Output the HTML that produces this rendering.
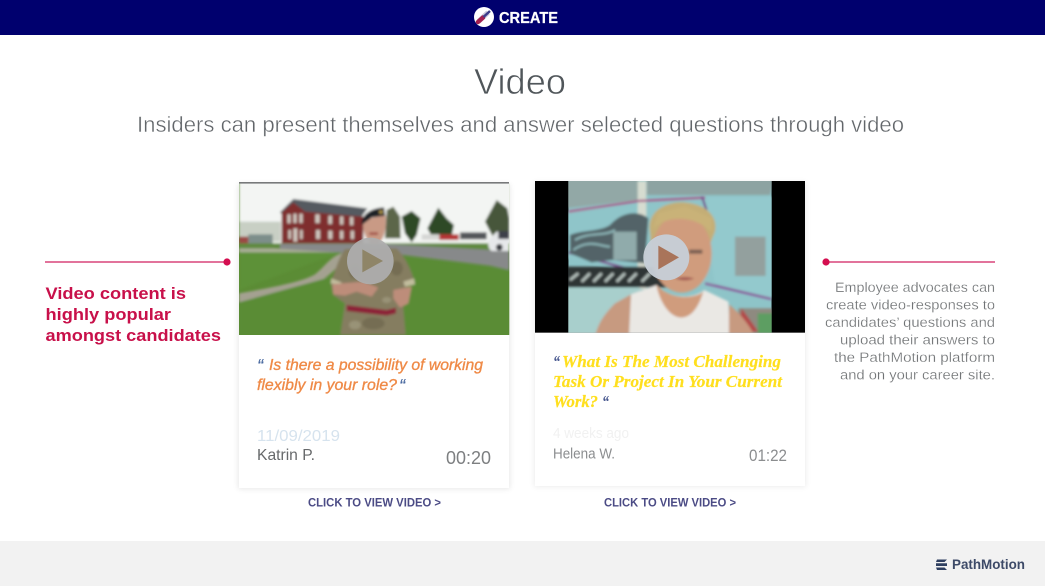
<!DOCTYPE html>
<html lang="en"><head><meta charset="utf-8"><title>Video</title>
<style>
html,body{margin:0;padding:0;background:#fff;width:1045px;height:586px;overflow:hidden}
svg{display:block}
text{font-family:"Liberation Sans",sans-serif}
</style></head><body>
<svg width="1045" height="586" viewBox="0 0 1045 586" xmlns="http://www.w3.org/2000/svg">
<defs>
<filter id="b" x="-10%" y="-10%" width="120%" height="120%"><feGaussianBlur stdDeviation="3.6"/></filter>
<filter id="s" x="-10%" y="-10%" width="120%" height="120%"><feGaussianBlur stdDeviation="3"/></filter>
<clipPath id="c1"><rect x="27" y="25" width="811" height="455"/></clipPath>
<clipPath id="c2"><rect x="130" y="18" width="610" height="455"/></clipPath>
</defs>
<rect width="1045" height="586" fill="#fff"/>
<rect width="1045" height="35" fill="#00006e"/>
<circle cx="484" cy="17" r="10" fill="#fff"/>
<path d="M478.5 21.5 L488 12.5" stroke="#c8c8d8" stroke-width="5"/>
<path d="M478 22 L483 17.5" stroke="#a31f50" stroke-width="4.5" stroke-linecap="round"/>
<path d="M483.5 17 L490 11" stroke="#3d3d8a" stroke-width="2.5"/>
<text x="499" y="23" font-size="16" font-weight="700" fill="#fff" stroke="#fff" stroke-width=".25" textLength="59" lengthAdjust="spacingAndGlyphs">CREATE</text>

<text x="474" y="94" font-size="36.5" fill="#50565a" stroke="#fff" stroke-width=".7" textLength="92" lengthAdjust="spacingAndGlyphs">Video</text>
<text x="137" y="132" font-size="22" fill="#62666a" stroke="#fff" stroke-width=".4" textLength="767" lengthAdjust="spacingAndGlyphs">Insiders can present themselves and answer selected questions through video</text>

<!-- left callout -->
<path d="M45 262H227" stroke="#d8457a" stroke-width="1.4"/>
<circle cx="227" cy="262" r="3.6" fill="#d40e4f"/>
<g font-size="16.5" font-weight="700" fill="#c8104a">
<text x="45.5" y="299" textLength="140.5" lengthAdjust="spacingAndGlyphs">Video content is</text>
<text x="45.5" y="320" textLength="125.5" lengthAdjust="spacingAndGlyphs">highly popular</text>
<text x="45.5" y="341" textLength="175.5" lengthAdjust="spacingAndGlyphs">amongst candidates</text>
</g>

<!-- right callout -->
<path d="M826 262H995" stroke="#d8457a" stroke-width="1.4"/>
<circle cx="826" cy="262" r="3.6" fill="#d40e4f"/>
<g font-size="14.2" fill="#6f7274" stroke="#fff" stroke-width=".22">
<text x="835" y="292" textLength="160" lengthAdjust="spacingAndGlyphs">Employee advocates can</text>
<text x="826" y="309.5" textLength="169" lengthAdjust="spacingAndGlyphs">create video-responses to</text>
<text x="825" y="327" textLength="170" lengthAdjust="spacingAndGlyphs">candidates’ questions and</text>
<text x="840" y="344.5" textLength="155" lengthAdjust="spacingAndGlyphs">upload their answers to</text>
<text x="834" y="362" textLength="161" lengthAdjust="spacingAndGlyphs">the PathMotion platform</text>
<text x="840" y="379.5" textLength="155" lengthAdjust="spacingAndGlyphs">and on your career site.</text>
</g>

<!-- card shadows -->
<rect x="238" y="184" width="272" height="305" fill="#000" opacity=".09" filter="url(#s)"/>
<rect x="534" y="182" width="272" height="305" fill="#000" opacity=".07" filter="url(#s)"/>
<rect x="239" y="183" width="270" height="305" fill="#fff"/>
<rect x="535" y="181" width="270" height="305" fill="#fff"/>

<!-- photo 1 -->
<g transform="translate(230 175) scale(.33333)">
<g clip-path="url(#c1)">
<rect x="27" y="25" width="811" height="455" fill="#5b8c35"/>
<g filter="url(#b)">
<rect x="27" y="15" width="830" height="190" fill="#f3f5f3"/>
<rect x="27" y="140" width="125" height="60" fill="#c8cfc4"/>
<rect x="55" y="178" width="73" height="44" fill="#7d8e8a"/>
<rect x="27" y="185" width="28" height="22" fill="#9b4a45"/>
<path d="M27 205H838V232H27Z" fill="#5f8a3c"/>
<path d="M150 207H470L838 228V285L780 272L520 240L340 235L150 225Z" fill="#87898a"/>
<path d="M27 220H130L320 232L27 240Z" fill="#a9ae95"/>
<path d="M150 112L190 72L412 100L395 125H165Z" fill="#555a60"/>
<path d="M155 112L190 82L225 110L400 125V205H155Z" fill="#7f2f2d"/>
<g fill="#cfc8c0"><rect x="172" y="118" width="10" height="27"/><rect x="190" y="116" width="10" height="28"/><rect x="208" y="116" width="10" height="28"/><rect x="256" y="118" width="13" height="26"/><rect x="295" y="122" width="11" height="25"/><rect x="330" y="124" width="10" height="25"/><rect x="360" y="126" width="10" height="25"/><rect x="175" y="165" width="8" height="27"/><rect x="190" y="160" width="12" height="40"/><rect x="210" y="165" width="8" height="27"/><rect x="258" y="165" width="12" height="27"/><rect x="295" y="167" width="12" height="25"/><rect x="330" y="167" width="10" height="25"/><rect x="362" y="167" width="10" height="25"/></g>
<path d="M465 190L470 105L490 95L510 125L512 190Z" fill="#5b6648"/>
<path d="M515 125L545 108L572 130L560 180L545 202L525 175Z" fill="#2e4a25"/>
<path d="M592 160L625 98L650 130L672 150L665 183H605Z" fill="#2f4a28"/>
<path d="M765 140L800 75L832 100L838 130V180L790 188Z" fill="#46573a"/>
<rect x="575" y="178" width="55" height="16" fill="#d5d6d4"/>
<rect x="628" y="178" width="58" height="17" fill="#b53535"/>
<rect x="690" y="172" width="80" height="21" fill="#53565a"/>
<path d="M775 195L800 170H838V228H785Q772 220 775 195Z" fill="#e6e8ea"/>
<rect x="805" y="168" width="33" height="24" fill="#3c3f48"/>
<circle cx="808" cy="217" r="10" fill="#33363a"/>
<path d="M27 232H335L250 262L27 345Z" fill="#5d9137"/>
<path d="M335 235C300 245 285 275 255 298C215 322 110 340 27 355V382C110 362 210 345 265 322C295 305 320 280 345 250Z" fill="#a4a191"/>
<path d="M520 246L838 285V480H27V382Z" fill="#5a8c35"/>
<path d="M345 222L500 220C530 250 545 290 555 325L525 338L520 400L527 480H331L345 385L310 360L302 320C315 290 325 250 345 222Z" fill="#857d60"/>
<g fill="#69634a" opacity=".6"><ellipse cx="375" cy="290" rx="18" ry="20"/><ellipse cx="500" cy="280" rx="18" ry="22"/><ellipse cx="430" cy="445" rx="34" ry="18"/></g>
<g fill="#a7a287" opacity=".6"><ellipse cx="470" cy="375" rx="14" ry="9"/><ellipse cx="375" cy="450" rx="18" ry="13"/></g>
<path d="M304 310L335 322L333 328L302 326Z" fill="#c2bd9e"/>
<path d="M520 320L552 310L555 328L525 335Z" fill="#c2bd9e"/>
<path d="M399 135C398 175 410 205 434 208C458 205 470 175 467 120Z" fill="#c99a85"/>
<path d="M395 150C393 120 420 100 462 97L465 122L425 128Z" fill="#1d2026"/>
<circle cx="453" cy="111" r="6" fill="#a78f45"/>
<rect x="418" y="172" width="26" height="8" fill="#a4524a"/>
<path d="M350 390L470 405L498 398V415L470 422L350 408Z" fill="#8c2439"/>
<path d="M307 328C340 325 375 322 400 320L445 338L425 365L380 350L345 362L310 358Z" fill="#bd8d7a"/>
<path d="M490 345L545 335L535 385L510 398L490 370Z" fill="#bd8d7a"/>
</g>
</g>
<circle cx="421" cy="258" r="70" fill="#adadad" opacity=".94"/>
<path d="M397 223L459 258L397 292Z" fill="#8f8568"/>
</g>

<!-- top dark edge -->
<rect x="239" y="182" width="270" height="1.6" fill="#77797a"/>

<!-- photo 2 -->
<g transform="translate(525 175) scale(.33333)">
<rect x="30" y="18" width="810" height="455" fill="#000"/>
<g clip-path="url(#c2)">
<rect x="130" y="18" width="610" height="455" fill="#8ec4c8"/>
<g filter="url(#b)">
<path d="M120 8H340V75L120 100Z" fill="#92a8a6"/>
<path d="M365 8H750L735 60H365Z" fill="#8da3a2"/>
<path d="M545 65H750V370L560 320Z" fill="#93c9cd"/>
<path d="M120 110L530 75L570 330L120 250Z" fill="#8fc5c9"/>
<rect x="338" y="18" width="26" height="325" fill="#d6dcd0"/>
<path d="M130 110L340 78L540 68" fill="none" stroke="#a8608e" stroke-width="7"/>
<path d="M530 65L545 105" stroke="#75508a" stroke-width="6"/>
<path d="M130 232L340 290" stroke="#7a4a8c" stroke-width="7"/>
<path d="M540 325L740 372" stroke="#8a5c9a" stroke-width="7"/>
<path d="M135 180C170 165 225 170 255 150C290 110 340 105 370 130L360 265L260 255L200 262L135 235Z" fill="#526468"/>
<path d="M150 195C190 170 240 185 270 165" stroke="#8fb8ba" stroke-width="6" fill="none"/>
<path d="M145 225C190 190 230 215 255 215" stroke="#8fb8ba" stroke-width="6" fill="none"/>
<rect x="265" y="170" width="70" height="85" fill="#90abab"/>
<rect x="120" y="275" width="310" height="62" fill="#2e3436"/>
<path d="M135 315L160 295M170 320L195 295M205 320L230 295M240 320L265 295M275 320L300 295M310 320L335 295M350 320L375 295" stroke="#b8c4c0" stroke-width="8"/>
<rect x="120" y="338" width="225" height="145" fill="#a8cfcc"/>
<rect x="630" y="185" width="92" height="118" fill="#93a09e"/>
<rect x="640" y="400" width="110" height="83" fill="#8e8a80"/>
<rect x="698" y="415" width="52" height="68" fill="#5d9e62"/>
<path d="M650 400L700 470H640Z" fill="#b34a4a"/>
<path d="M375 170C365 110 420 78 480 82C545 88 580 125 570 170L550 220L380 220Z" fill="#c4ae76"/>
<ellipse cx="470" cy="235" rx="90" ry="118" fill="#d09c7d"/>
<path d="M385 160C420 125 500 115 560 170L560 130L480 95L400 115Z" fill="#c9b278"/>
<rect x="492" y="224" width="40" height="12" fill="#7a5f52"/>
<path d="M450 310Q480 302 508 310Q480 322 450 310Z" fill="#a45c52"/>
<path d="M395 330C430 370 500 375 538 345L610 380L615 483H310L318 358Z" fill="#eae8e4"/>
<path d="M395 335C420 440 500 470 535 350L540 345C520 370 440 380 395 330Z" fill="#d09c7d"/>
<path d="M318 358L270 385C235 420 220 445 210 483H312Z" fill="#c79a80"/>
<path d="M612 388C640 410 670 445 690 483H612Z" fill="#c79a80"/>
</g>
</g>
<circle cx="424" cy="247" r="69" fill="#c6cdd6" opacity=".97"/>
<path d="M400 212L462 247L400 283Z" fill="#a9745a"/>
</g>

<!-- card 1 text -->
<text x="257" y="370" font-size="16" font-weight="700" font-style="italic" fill="#4a6aa0" textLength="7" lengthAdjust="spacingAndGlyphs">“</text>
<text x="269" y="370" font-size="16" font-style="italic" fill="#ef8a47" stroke="#ef8a47" stroke-width=".35" textLength="214" lengthAdjust="spacingAndGlyphs">Is there a possibility of working</text>
<text x="257" y="390" font-size="16" font-style="italic" fill="#ef8a47" stroke="#ef8a47" stroke-width=".35" textLength="140" lengthAdjust="spacingAndGlyphs">flexibly in your role?</text>
<text x="399" y="390" font-size="16" font-weight="700" font-style="italic" fill="#4a6aa0" textLength="7" lengthAdjust="spacingAndGlyphs">“</text>
<text x="257" y="441" font-size="16" fill="#d6e3ee" textLength="83" lengthAdjust="spacingAndGlyphs">11/09/2019</text>
<text x="257" y="460" font-size="16" fill="#67696b" textLength="58" lengthAdjust="spacingAndGlyphs">Katrin P.</text>
<text x="446" y="464" font-size="18" fill="#7d7f81" textLength="45" lengthAdjust="spacingAndGlyphs">00:20</text>
<text x="308" y="506.5" font-size="12" font-weight="700" fill="#4b4b85" textLength="133" lengthAdjust="spacingAndGlyphs">CLICK TO VIEW VIDEO &gt;</text>

<!-- card 2 text -->
<text x="553" y="367" font-size="17" font-weight="700" font-style="italic" fill="#4a5a90" style="font-family:'Liberation Serif',serif" textLength="7" lengthAdjust="spacingAndGlyphs">“</text>
<g font-size="17" font-weight="700" font-style="italic" fill="#ffdf1e" stroke="#ffdf1e" stroke-width=".2">
<text x="562" y="367" style="font-family:'Liberation Serif',serif" textLength="219" lengthAdjust="spacingAndGlyphs">What Is The Most Challenging</text>
<text x="553" y="387" style="font-family:'Liberation Serif',serif" textLength="229" lengthAdjust="spacingAndGlyphs">Task Or Project In Your Current</text>
<text x="553" y="407" style="font-family:'Liberation Serif',serif" textLength="45" lengthAdjust="spacingAndGlyphs">Work?</text>
</g>
<text x="602" y="407" font-size="17" font-weight="700" font-style="italic" fill="#4a5a90" style="font-family:'Liberation Serif',serif" textLength="7" lengthAdjust="spacingAndGlyphs">“</text>
<text x="553" y="438" font-size="15" fill="#f1f1f1" textLength="76" lengthAdjust="spacingAndGlyphs">4 weeks ago</text>
<text x="553" y="458.5" font-size="15" fill="#8b8d8f" textLength="62" lengthAdjust="spacingAndGlyphs">Helena W.</text>
<text x="749" y="461" font-size="17" fill="#8b8d8f" textLength="38" lengthAdjust="spacingAndGlyphs">01:22</text>
<text x="604" y="506.5" font-size="12" font-weight="700" fill="#4b4b85" textLength="132" lengthAdjust="spacingAndGlyphs">CLICK TO VIEW VIDEO &gt;</text>

<!-- footer -->
<rect y="541" width="1045" height="45" fill="#f2f2f2"/>
<path d="M937 559.5H947L944.5 562H936ZM936 563.2H947L947 566H936ZM936 567.5H944.5L947 570H937Z" fill="#2f3f60"/>
<text x="952" y="569" font-size="14" font-weight="700" fill="#3d4a68" textLength="73" lengthAdjust="spacingAndGlyphs">PathMotion</text>
</svg>
</body></html>
